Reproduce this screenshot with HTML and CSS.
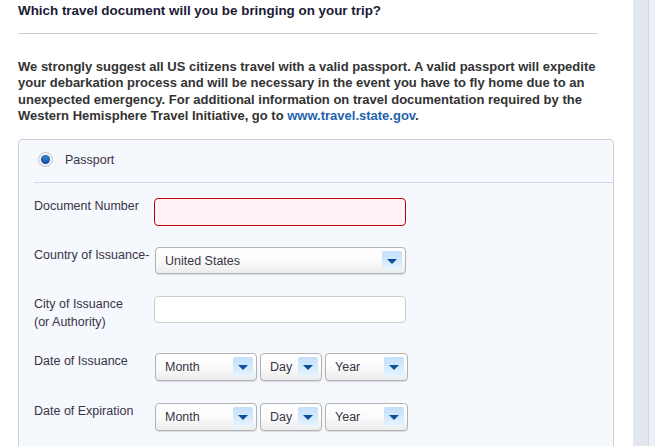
FILE: index.html
```html
<!DOCTYPE html>
<html>
<head>
<meta charset="utf-8">
<link rel="stylesheet" href="styles.css">
</head>
<body>
<div class="page">
  <main class="content">
    <h1 class="title">Which travel document will you be bringing on your trip?</h1>
    <hr class="rule">
    <p class="intro">We strongly suggest all US citizens travel with a valid passport. A valid passport will expedite your debarkation process and will be necessary in the event you have to fly home due to an unexpected emergency. For additional information on travel documentation required by the Western Hemisphere Travel Initiative, go to <a class="link" href="#">www.travel.state.gov</a>.</p>
    <section class="panel">
      <div class="panel-head">
        <span class="radio"><span class="radio-dot"></span></span>
        <span class="radio-label">Passport</span>
      </div>
      <div class="fields">
        <div class="row row-doc">
          <label class="label">Document Number</label>
          <div class="input input-error"></div>
        </div>
        <div class="row row-country">
          <label class="label">Country of Issuance-</label>
          <div class="select select-wide"><span class="select-text">United States</span><span class="arrow"></span></div>
        </div>
        <div class="row row-city">
          <label class="label">City of Issuance<br>(or Authority)</label>
          <div class="input"></div>
        </div>
        <div class="row row-date">
          <label class="label">Date of Issuance</label>
          <div class="date-group">
            <div class="select select-month"><span class="select-text">Month</span><span class="arrow"></span></div>
            <div class="select select-day"><span class="select-text">Day</span><span class="arrow"></span></div>
            <div class="select select-year"><span class="select-text">Year</span><span class="arrow"></span></div>
          </div>
        </div>
        <div class="row row-date">
          <label class="label">Date of Expiration</label>
          <div class="date-group">
            <div class="select select-month"><span class="select-text">Month</span><span class="arrow"></span></div>
            <div class="select select-day"><span class="select-text">Day</span><span class="arrow"></span></div>
            <div class="select select-year"><span class="select-text">Year</span><span class="arrow"></span></div>
          </div>
        </div>
      </div>
    </section>
  </main>
  <aside class="rail"><div class="rail-inner"></div></aside>
</div>
</body>
</html>
```

FILE: styles.css
```css
html, body {
  margin: 0;
  padding: 0;
  background: #ffffff;
  overflow: hidden;
}

.page {
  display: flex;
  width: 655px;
  height: 446px;
  overflow: hidden;
}

.content {
  width: 615px;
  padding-left: 18px;
  flex: none;
  font-family: "Liberation Sans", Arial, sans-serif;
}

.title {
  margin: 0;
  padding-top: 4px;
  font-size: 13.4px;
  line-height: 14px;
  font-weight: bold;
  color: #1b1b36;
}

.rule {
  width: 580px;
  margin: 15px 0 0 0;
  border: 0;
  border-top: 1px solid #cccccc;
  height: 0;
}

.intro {
  margin: 25px 0 0 0;
  width: 600px;
  font-size: 13px;
  line-height: 16.3px;
  font-weight: bold;
  color: #333333;
}

.link {
  color: #1f63ad;
  text-decoration: none;
}

.panel {
  margin-top: 15px;
  width: 594px;
  height: 320px;
  border: 1px solid #cfcfcf;
  border-radius: 4px;
  background: #f5f8fd;
}

.panel-head {
  display: flex;
  align-items: center;
  height: 42px;
  margin-left: 15px;
  padding-left: 4px;
  border-bottom: 1px solid #c9daea;
}

.radio {
  width: 13px;
  height: 13px;
  border: 1px solid #c4c4c4;
  border-radius: 50%;
  background: radial-gradient(circle at 50% 40%, #ffffff 0%, #e9e9e9 100%);
  display: flex;
  align-items: center;
  justify-content: center;
  margin-top: -4px;
}

.radio-dot {
  width: 9px;
  height: 9px;
  border-radius: 50%;
  background: radial-gradient(circle at 50% 30%, #3a86d6 0%, #1a56a8 60%, #163f8a 100%);
}

.radio-label {
  margin-left: 12px;
  margin-top: -3px;
  font-size: 12.5px;
  color: #3a3346;
}

.fields {
  display: flex;
  flex-direction: column;
  padding: 15px 0 0 15px;
}

.row {
  display: flex;
  align-items: flex-start;
}

.row-doc { margin-bottom: 21px; }
.row-country { margin-bottom: 22px; }
.row-city { margin-bottom: 22px; }
.row-date { margin-bottom: 22px; }

.label {
  width: 120px;
  flex: none;
  margin-top: -1px;
  font-size: 12.5px;
  line-height: 18px;
  color: #3a3346;
}

.input {
  width: 250px;
  height: 25px;
  border: 1px solid #cccccc;
  border-radius: 4px;
  background: #ffffff;
}

.input-error {
  height: 26px;
  border-color: #c00000;
  background: #fff1f4;
}

.select {
  position: relative;
  height: 25px;
  border: 1px solid #b2b2b2;
  border-radius: 4px;
  background: linear-gradient(#ffffff 0%, #fbfbfb 50%, #ececec 100%);
  box-shadow: 0 1px 1px rgba(0, 0, 0, 0.12);
  display: flex;
  align-items: center;
  box-sizing: border-box;
}

.select-wide {
  width: 251px;
  height: 27px;
  margin-left: 1px;
}

.select-text {
  padding-left: 9px;
  font-size: 12.5px;
  color: #3a3346;
}

.arrow {
  position: absolute;
  right: 3px;
  top: 3px;
  bottom: 3px;
  width: 20px;
  border-radius: 2px;
  background: linear-gradient(#c3e0fb 0%, #d7ebfd 60%, #e9f5fe 100%);
}

.arrow::after {
  content: "";
  position: absolute;
  left: 50%;
  top: 50%;
  margin-left: -5px;
  margin-top: -2px;
  border-left: 5px solid transparent;
  border-right: 5px solid transparent;
  border-top: 5px solid #0f4f98;
}

.date-group {
  display: flex;
  gap: 3px;
  margin-left: 1px;
}

.date-group .select {
  height: 28px;
}

.select-month { width: 102px; }
.select-day { width: 62px; }
.select-year { width: 83px; }

.rail {
  width: 22px;
  flex: none;
  background: #e3e7f0;
  display: flex;
  justify-content: flex-end;
}

.rail-inner {
  width: 6px;
  border-left: 1px solid #d2d7e2;
  background: #eef1f8;
}
```
